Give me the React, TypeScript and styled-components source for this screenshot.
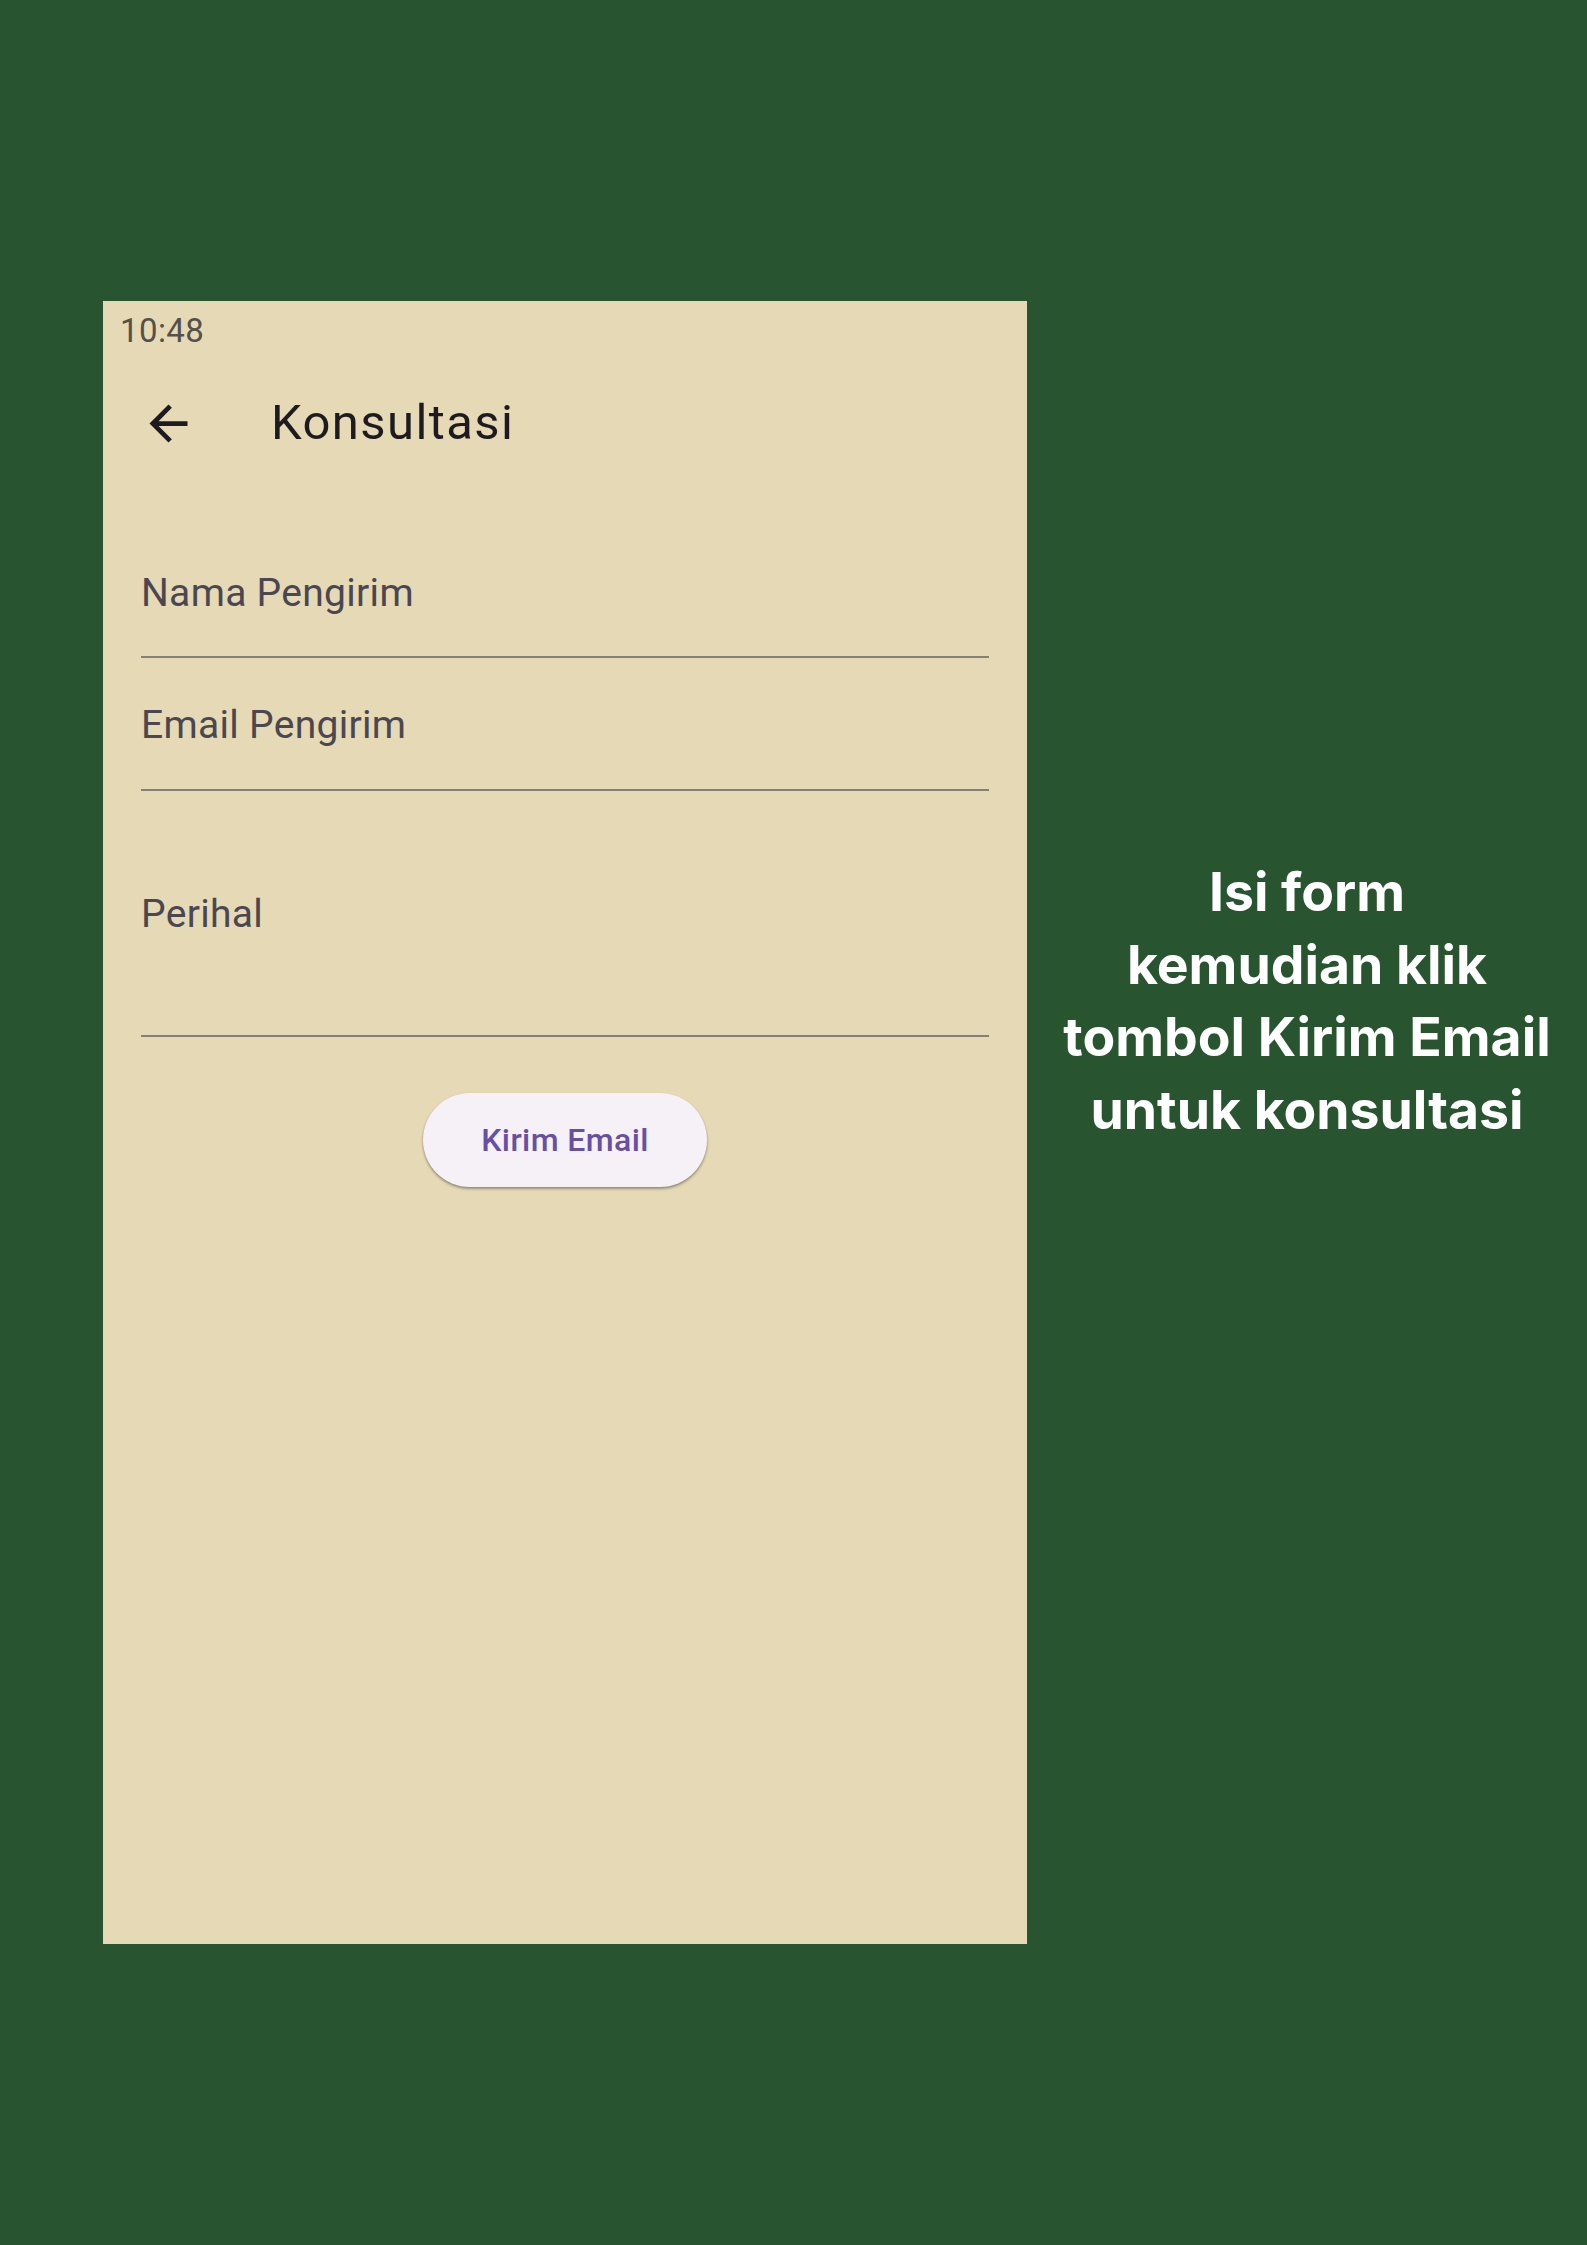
import React from "react";
import styled, { createGlobalStyle } from "styled-components";

const GlobalStyle = createGlobalStyle`
  html, body {
    margin: 0;
    padding: 0;
    background: #28542f;
  }
  * { box-sizing: border-box; }
`;

const Page = styled.div`
  display: flex;
  align-items: flex-start;
  min-height: 2245px;
  padding: 301px 0 0 103px;
  background: #28542f;
`;

const Phone = styled.div`
  width: 924px;
  height: 1643px;
  flex: none;
  display: flex;
  flex-direction: column;
  background: #e5d9b6;
  font-family: Roboto, "Liberation Sans", sans-serif;
`;

const StatusBar = styled.div`
  height: 66px;
  padding: 10px 0 0 17px;
  font-size: 33px;
  font-weight: 400;
  letter-spacing: 0.4px;
  line-height: 40px;
  color: #54504a;
`;

const AppBar = styled.div`
  height: 112px;
  display: flex;
  align-items: center;
  gap: 74px;
  padding-left: 37px;
`;

const IconButton = styled.div`
  width: 57px;
  height: 57px;
  display: flex;
  color: #1d1b20;
`;

const Title = styled.h1`
  margin: 0;
  font-size: 49px;
  font-weight: 400;
  letter-spacing: 1.4px;
  line-height: 56px;
  color: #1d1b20;
`;

const Form = styled.div`
  display: flex;
  flex-direction: column;
  padding: 47px 38px 0;
`;

const Field = styled.div<{ $top: number; $bottom: number }>`
  padding: ${(p) => p.$top}px 0 ${(p) => p.$bottom}px;
  border-bottom: 2px solid #858078;
`;

const Label = styled.div`
  font-size: 39px;
  letter-spacing: 0.3px;
  line-height: 46px;
  color: #4b4750;
`;

const ButtonRow = styled.div`
  display: flex;
  justify-content: center;
  margin-top: 56px;
`;

const ElevatedButton = styled.button`
  width: 284px;
  height: 94px;
  border: none;
  border-radius: 47px;
  background: #f6f1f7;
  box-shadow: 0 2px 3px rgba(0, 0, 0, 0.28), 0 1px 2px rgba(0, 0, 0, 0.15);
  font-family: Roboto, "Liberation Sans", sans-serif;
  font-size: 32px;
  font-weight: 500;
  letter-spacing: 0.4px;
  color: #6750a4;
  cursor: pointer;
`;

const Side = styled.div`
  flex: 1;
  padding-top: 555px;
  text-align: center;
  font-family: Inter, "Open Sans", sans-serif;
  font-weight: 700;
  font-size: 53.5px;
  line-height: 72.5px;
  color: #ffffff;
`;

const Line = styled.div``;

const ArrowBack = () => (
  <svg width="57" height="57" viewBox="0 0 24 24" fill="currentColor">
    <path d="M20 11H7.83l5.59-5.59L12 4l-8 8 8 8 1.41-1.41L7.83 13H20v-2z" />
  </svg>
);

export default function App() {
  return (
    <>
      <GlobalStyle />
      <Page>
        <Phone>
          <StatusBar>10:48</StatusBar>
          <AppBar>
            <IconButton>
              <ArrowBack />
            </IconButton>
            <Title>Konsultasi</Title>
          </AppBar>
          <Form>
            <Field $top={44} $bottom={40}>
              <Label>Nama Pengirim</Label>
            </Field>
            <Field $top={44} $bottom={41}>
              <Label>Email Pengirim</Label>
            </Field>
            <Field $top={100} $bottom={98}>
              <Label>Perihal</Label>
            </Field>
            <ButtonRow>
              <ElevatedButton>Kirim Email</ElevatedButton>
            </ButtonRow>
          </Form>
        </Phone>
        <Side>
          <Line>Isi form</Line>
          <Line>kemudian klik</Line>
          <Line>tombol Kirim Email</Line>
          <Line>untuk konsultasi</Line>
        </Side>
      </Page>
    </>
  );
}
